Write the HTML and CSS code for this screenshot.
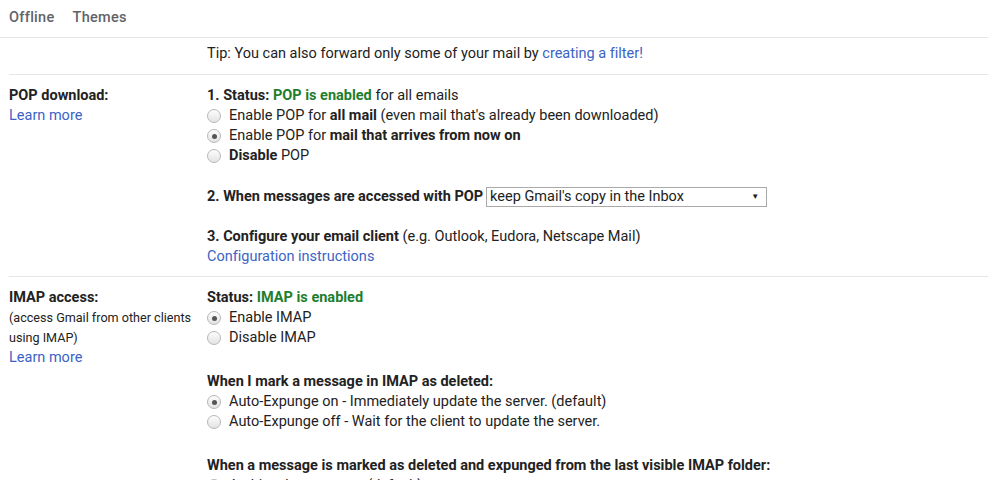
FILE: index.html
```html
<!DOCTYPE html>
<html>
<head>
<meta charset="utf-8">
<link rel="stylesheet" href="styles.css">
</head>
<body>
<div class="nav">
  <span class="nav-item">Offline</span>
  <span class="nav-item">Themes</span>
</div>
<div class="content">
  <div class="section tip-section">
    <div class="label-col"></div>
    <div class="value-col">
      <div class="line">Tip: You can also forward only some of your mail by <a class="link">creating a filter!</a></div>
    </div>
  </div>

  <div class="section">
    <div class="label-col">
      <div class="line"><b>POP download:</b></div>
      <div class="line"><a class="link">Learn more</a></div>
    </div>
    <div class="value-col">
      <div class="line"><b>1. Status: <span class="green">POP is enabled</span></b> for all emails</div>
      <div class="line radio-row"><span class="radio"></span><span>Enable POP for <b>all mail</b> (even mail that's already been downloaded)</span></div>
      <div class="line radio-row"><span class="radio checked"></span><span>Enable POP for <b>mail that arrives from now on</b></span></div>
      <div class="line radio-row"><span class="radio"></span><span><b>Disable</b> POP</span></div>
      <div class="line select-row"><b>2. When messages are accessed with POP</b>
        <div class="select"><span>keep Gmail's copy in the Inbox</span><span class="arrow">▼</span></div>
      </div>
      <div class="line gap20"><b>3. Configure your email client</b> (e.g. Outlook, Eudora, Netscape Mail)</div>
      <div class="line"><a class="link">Configuration instructions</a></div>
    </div>
  </div>

  <div class="section">
    <div class="label-col">
      <div class="line"><b>IMAP access:</b></div>
      <div class="line small">(access Gmail from other clients</div>
      <div class="line small">using IMAP)</div>
      <div class="line"><a class="link">Learn more</a></div>
    </div>
    <div class="value-col">
      <div class="line"><b>Status: <span class="green">IMAP is enabled</span></b></div>
      <div class="line radio-row"><span class="radio checked"></span><span>Enable IMAP</span></div>
      <div class="line radio-row"><span class="radio"></span><span>Disable IMAP</span></div>
      <div class="line gap24"><b>When I mark a message in IMAP as deleted:</b></div>
      <div class="line radio-row"><span class="radio checked"></span><span>Auto-Expunge on - Immediately update the server. (default)</span></div>
      <div class="line radio-row"><span class="radio"></span><span>Auto-Expunge off - Wait for the client to update the server.</span></div>
      <div class="line gap24"><b>When a message is marked as deleted and expunged from the last visible IMAP folder:</b></div>
      <div class="line radio-row"><span class="radio checked"></span><span>Archive the message (default)</span></div>
    </div>
  </div>
</div>
</body>
</html>
```
FILE: styles.css
```css
html, body {
  margin: 0;
  padding: 0;
  background: #fff;
  overflow: hidden;
}
body {
  font-family: Roboto, "Liberation Sans", Arial, sans-serif;
  font-size: 14.5px;
  color: #222;
  font-variant-ligatures: none;
}
b { font-weight: 700; }
.nav {
  height: 35px;
  padding-bottom: 2px;
  border-bottom: 1px solid #e6e6e6;
  display: flex;
  align-items: center;
  padding-left: 9px;
  gap: 18px;
}
.nav-item {
  font-size: 14.5px;
  color: #5f6368;
  font-weight: 500;
  letter-spacing: 0.3px;
}
.content {
  padding-left: 9px;
}
.section {
  display: flex;
  border-top: 1px solid #e6e6e6;
  padding: 11px 0 9px;
}
.tip-section {
  border-top: none;
  padding: 6px 0 10px;
}
.label-col {
  width: 198px;
  flex: none;
}
.value-col {
  flex: 1;
}
.line {
  line-height: 20px;
  height: 20px;
  white-space: nowrap;
}
.small {
  font-size: 12.6px;
}
.link {
  color: #3b63c4;
  text-decoration: none;
}
.green {
  color: #1e7e2e;
}
.radio-row {
  display: flex;
  align-items: center;
}
.radio {
  width: 12px;
  height: 12px;
  border: 1px solid #b8b8b8;
  border-radius: 50%;
  background: linear-gradient(#fdfdfd, #e3e3e3);
  margin-left: 0;
  margin-right: 8px;
  display: inline-flex;
  align-items: center;
  justify-content: center;
  flex: none;
}
.radio.checked::after {
  content: "";
  width: 5px;
  height: 5px;
  border-radius: 50%;
  background: #555;
}
.select-row {
  margin-top: 20px;
  height: 21px;
  display: flex;
  align-items: center;
}
.select {
  margin-left: 3px;
  width: 276px;
  height: 18px;
  border: 1px solid #a9a9a9;
  display: flex;
  align-items: center;
  justify-content: space-between;
  padding: 0 0 0 3px;
  box-sizing: content-box;
  font-weight: 400;
  line-height: 18px;
}
.select .arrow {
  font-size: 8px;
  margin-right: 7px;
  color: #222;
}
.gap20 { margin-top: 20px; }
.gap24 { margin-top: 24px; }
```
